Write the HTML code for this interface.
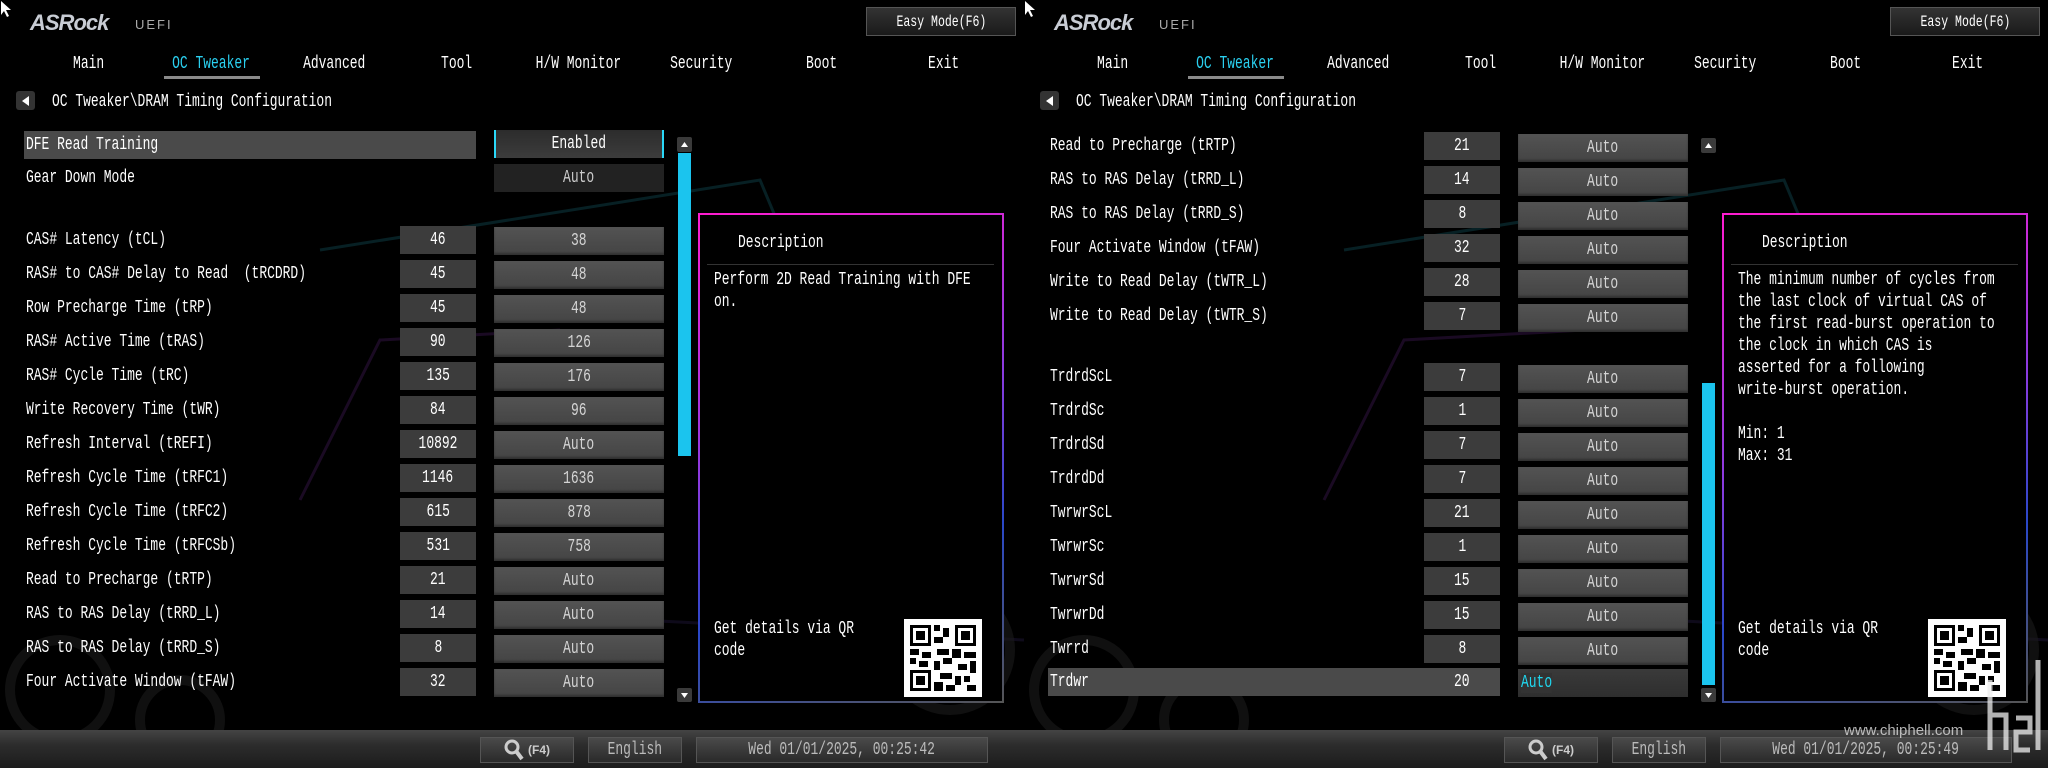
<!DOCTYPE html>
<html><head><meta charset="utf-8">
<style>
*{margin:0;padding:0;box-sizing:border-box}
body{width:2048px;height:768px;background:#000;overflow:hidden;position:relative;font-family:"Liberation Mono","DejaVu Sans Mono",monospace;color:#fff}
.half{position:absolute;top:0;width:1024px;height:768px;overflow:hidden;background:#000}
.a{position:absolute}
.s{display:inline-block;white-space:nowrap;transform:scaleX(.72);transform-origin:0 50%;font-size:18px;line-height:20px}
.c{display:flex;align-items:center;justify-content:center}
.c .s{transform-origin:50% 50%}
.lbl,.val,.set{margin-top:2px}
.lbl{position:absolute;left:26px;height:28px;display:flex;align-items:center}
.val{position:absolute;left:400px;width:76px;height:28px;background:#3c3c3c}
.set{position:absolute;left:494px;width:170px;height:28px;background:linear-gradient(#535353,#444);color:#d4d4d4;box-shadow:inset 0 -2px 2px rgba(0,0,0,.3)}
.tab{position:absolute;top:54px;height:22px;display:flex;justify-content:center;width:120px}
.tab .s{transform-origin:50% 50%}
.btn{position:absolute;top:737px;height:26px;background:linear-gradient(#4a4a4a,#2a2a2a);border:1px solid #555;color:#bbb}
.bar{position:absolute;left:0;top:730px;width:1024px;height:38px;background:linear-gradient(#444,#2c2c2c 40%,#1c1c1c)}
.panel{position:absolute;left:698px;top:213px;width:306px;height:490px;background:linear-gradient(160deg,#ff1cd0,#8a3be0 45%,#2a48c8 70%,#555);padding:2px}
.panel>div{width:100%;height:100%;background:#000;position:relative}
.logo{position:absolute;left:30px;top:10px;font:italic 900 22px 'Liberation Sans',sans-serif;color:#c8ccd4;letter-spacing:-1px}
</style></head><body>

<!-- ============ LEFT HALF ============ -->
<div class="half" style="left:0">
<svg class="a" style="left:0;top:0" width="1024" height="768">
 <g fill="none" stroke-width="3" opacity=".25">
  <polyline points="320,250 760,180 860,420" stroke="#1a7f8f"/>
  <polyline points="300,500 380,340 560,330" stroke="#6a2a8a"/>
  <polyline points="640,620 1024,640" stroke="#3a2a6a"/>
  <polyline points="740,300 880,430 760,560" stroke="#1d3f5a"/>
 </g>
 <g fill="none" stroke="#1a1a1a" stroke-width="10" opacity=".6">
  <circle cx="60" cy="690" r="50"/><circle cx="180" cy="720" r="40"/><circle cx="950" cy="650" r="60"/>
 </g>
</svg>
<svg class="a" style="left:0;top:0" width="12" height="18"><path d="M1 1 L1 15 L4 11 L7 17 L9 16 L6 10 L11 10 Z" fill="#fff"/></svg>
<div class="logo">ASRock</div>
<div class="a" style="left:135px;top:17px;font:13px 'Liberation Sans',sans-serif;color:#aaa;letter-spacing:2px">UEFI</div>
<div class="a c" style="left:866px;top:7px;width:150px;height:29px;background:linear-gradient(#333,#1a1a1a);border:1px solid #555"><span class="s" style="font-size:16px">Easy Mode(F6)</span></div>

<div class="tab" style="left:29px"><span class="s">Main</span></div>
<div class="tab" style="left:151px;color:#2ad0f0"><span class="s">OC Tweaker</span></div>
<div class="a" style="left:164px;top:76px;width:96px;height:3px;background:#8a8a8a"></div>
<div class="tab" style="left:274px"><span class="s">Advanced</span></div>
<div class="tab" style="left:397px"><span class="s">Tool</span></div>
<div class="tab" style="left:518px"><span class="s">H/W Monitor</span></div>
<div class="tab" style="left:641px"><span class="s">Security</span></div>
<div class="tab" style="left:762px"><span class="s">Boot</span></div>
<div class="tab" style="left:884px"><span class="s">Exit</span></div>

<div class="a c" style="left:16px;top:91px;width:19px;height:19px;background:#333;border-radius:3px"><svg width="8" height="10"><path d="M7 0 L0 5 L7 10Z" fill="#fff"/></svg></div>
<div class="lbl" style="left:52px;top:86px"><span class="s">OC Tweaker\DRAM Timing Configuration</span></div>

<div class="a" style="left:24px;top:131px;width:452px;height:28px;background:#4a4a4a"></div>
<div class="lbl" style="top:129px"><span class="s">DFE Read Training</span></div>
<div class="a c" style="left:494px;top:130px;width:170px;height:28px;background:linear-gradient(#2c2c2c,#3c3c3c);border-left:2px solid #2ad8f8;border-right:2px solid #2ad8f8"><span class="s">Enabled</span></div>
<div class="lbl" style="top:162px"><span class="s">Gear Down Mode</span></div>
<div class="a c" style="left:494px;top:164px;width:170px;height:28px;background:#222;color:#ccc"><span class="s">Auto</span></div>

<div class="lbl" style="top:224px"><span class="s">CAS# Latency (tCL)</span></div><div class="val c" style="top:224px"><span class="s">46</span></div><div class="set c" style="top:225px"><span class="s">38</span></div>
<div class="lbl" style="top:258px"><span class="s">RAS# to CAS# Delay to Read&nbsp; (tRCDRD)</span></div><div class="val c" style="top:258px"><span class="s">45</span></div><div class="set c" style="top:259px"><span class="s">48</span></div>
<div class="lbl" style="top:292px"><span class="s">Row Precharge Time (tRP)</span></div><div class="val c" style="top:292px"><span class="s">45</span></div><div class="set c" style="top:293px"><span class="s">48</span></div>
<div class="lbl" style="top:326px"><span class="s">RAS# Active Time (tRAS)</span></div><div class="val c" style="top:326px"><span class="s">90</span></div><div class="set c" style="top:327px"><span class="s">126</span></div>
<div class="lbl" style="top:360px"><span class="s">RAS# Cycle Time (tRC)</span></div><div class="val c" style="top:360px"><span class="s">135</span></div><div class="set c" style="top:361px"><span class="s">176</span></div>
<div class="lbl" style="top:394px"><span class="s">Write Recovery Time (tWR)</span></div><div class="val c" style="top:394px"><span class="s">84</span></div><div class="set c" style="top:395px"><span class="s">96</span></div>
<div class="lbl" style="top:428px"><span class="s">Refresh Interval (tREFI)</span></div><div class="val c" style="top:428px"><span class="s">10892</span></div><div class="set c" style="top:429px"><span class="s">Auto</span></div>
<div class="lbl" style="top:462px"><span class="s">Refresh Cycle Time (tRFC1)</span></div><div class="val c" style="top:462px"><span class="s">1146</span></div><div class="set c" style="top:463px"><span class="s">1636</span></div>
<div class="lbl" style="top:496px"><span class="s">Refresh Cycle Time (tRFC2)</span></div><div class="val c" style="top:496px"><span class="s">615</span></div><div class="set c" style="top:497px"><span class="s">878</span></div>
<div class="lbl" style="top:530px"><span class="s">Refresh Cycle Time (tRFCSb)</span></div><div class="val c" style="top:530px"><span class="s">531</span></div><div class="set c" style="top:531px"><span class="s">758</span></div>
<div class="lbl" style="top:564px"><span class="s">Read to Precharge (tRTP)</span></div><div class="val c" style="top:564px"><span class="s">21</span></div><div class="set c" style="top:565px"><span class="s">Auto</span></div>
<div class="lbl" style="top:598px"><span class="s">RAS to RAS Delay (tRRD_L)</span></div><div class="val c" style="top:598px"><span class="s">14</span></div><div class="set c" style="top:599px"><span class="s">Auto</span></div>
<div class="lbl" style="top:632px"><span class="s">RAS to RAS Delay (tRRD_S)</span></div><div class="val c" style="top:632px"><span class="s">8</span></div><div class="set c" style="top:633px"><span class="s">Auto</span></div>
<div class="lbl" style="top:666px"><span class="s">Four Activate Window (tFAW)</span></div><div class="val c" style="top:666px"><span class="s">32</span></div><div class="set c" style="top:667px"><span class="s">Auto</span></div>

<div class="a c" style="left:677px;top:137px;width:15px;height:15px;background:#3a3a3a;border-radius:2px"><svg width="7" height="5"><path d="M0 5 L3.5 0 L7 5Z" fill="#fff"/></svg></div>
<div class="a" style="left:678px;top:153px;width:13px;height:303px;background:#1bc4ee"></div>
<div class="a c" style="left:677px;top:688px;width:15px;height:14px;background:#3a3a3a;border-radius:2px"><svg width="7" height="5"><path d="M0 0 L3.5 5 L7 0Z" fill="#fff"/></svg></div>

<div class="panel"><div>
 <div class="lbl" style="left:38px;top:12px"><span class="s">Description</span></div>
 <div class="a" style="left:7px;top:49px;width:287px;height:1px;background:#333"></div>
 <div class="a" style="left:14px;top:54px;line-height:22px"><div><span class="s">Perform 2D Read Training with DFE</span></div><div><span class="s">on.</span></div></div>
 <div class="a" style="left:14px;top:403px;line-height:22px"><div><span class="s">Get details via QR</span></div><div><span class="s">code</span></div></div>
 <svg class="a" style="left:204px;top:404px" width="78" height="78" viewBox="0 0 26 26"><rect width="26" height="26" fill="#fff"/><g fill="#000"><path d="M2 2h7v7H2zM17 2h7v7h-7zM2 17h7v7H2z"/></g><g fill="#fff"><path d="M3 3h5v5H3zM18 3h5v5h-5zM3 18h5v5H3z"/></g><g fill="#000"><path d="M4 4h3v3H4zM19 4h3v3h-3zM4 19h3v3H4zM10 2h2v2h-2zM13 3h2v3h-2zM10 6h3v2h-3zM11 10h4v2h-4zM2 10h3v2H2zM6 11h3v2H6zM16 10h3v3h-3zM20 11h4v2h-4zM10 14h2v3h-2zM13 13h3v2h-3zM18 15h3v2h-3zM22 14h2v4h-2zM12 18h4v2h-4zM17 19h2v3h-2zM20 19h2v2h-2zM10 21h3v3h-3zM14 22h3v2h-3zM21 22h3v2h-3zM2 13h2v2H2zM5 14h3v2H5z"/></g></svg>
</div></div>

<div class="bar"></div>
<div class="btn c" style="left:480px;width:94px"><svg width="20" height="22"><circle cx="8" cy="8" r="6" fill="none" stroke="#ccc" stroke-width="3"/><path d="M12 12 L18 20" stroke="#ccc" stroke-width="4"/></svg><span style="font:bold 12px 'Liberation Sans';color:#ccc;margin-left:4px">(F4)</span></div>
<div class="btn c" style="left:588px;width:94px"><span class="s">English</span></div>
<div class="btn c" style="left:696px;width:292px"><span class="s">Wed 01/01/2025, 00:25:42</span></div>
</div>

<!-- ============ RIGHT HALF ============ -->
<div class="half" style="left:1024px">
<svg class="a" style="left:0;top:0" width="1024" height="768">
 <g fill="none" stroke-width="3" opacity=".25">
  <polyline points="320,250 760,180 860,420" stroke="#1a7f8f"/>
  <polyline points="300,500 380,340 560,330" stroke="#6a2a8a"/>
  <polyline points="640,620 1024,640" stroke="#3a2a6a"/>
  <polyline points="740,300 880,430 760,560" stroke="#1d3f5a"/>
 </g>
 <g fill="none" stroke="#1a1a1a" stroke-width="10" opacity=".6">
  <circle cx="60" cy="690" r="50"/><circle cx="180" cy="720" r="40"/><circle cx="950" cy="650" r="60"/>
 </g>
</svg>
<svg class="a" style="left:0;top:0" width="12" height="18"><path d="M1 1 L1 15 L4 11 L7 17 L9 16 L6 10 L11 10 Z" fill="#fff"/></svg>
<div class="logo">ASRock</div>
<div class="a" style="left:135px;top:17px;font:13px 'Liberation Sans',sans-serif;color:#aaa;letter-spacing:2px">UEFI</div>
<div class="a c" style="left:866px;top:7px;width:150px;height:29px;background:linear-gradient(#333,#1a1a1a);border:1px solid #555"><span class="s" style="font-size:16px">Easy Mode(F6)</span></div>

<div class="tab" style="left:29px"><span class="s">Main</span></div>
<div class="tab" style="left:151px;color:#2ad0f0"><span class="s">OC Tweaker</span></div>
<div class="a" style="left:164px;top:76px;width:96px;height:3px;background:#8a8a8a"></div>
<div class="tab" style="left:274px"><span class="s">Advanced</span></div>
<div class="tab" style="left:397px"><span class="s">Tool</span></div>
<div class="tab" style="left:518px"><span class="s">H/W Monitor</span></div>
<div class="tab" style="left:641px"><span class="s">Security</span></div>
<div class="tab" style="left:762px"><span class="s">Boot</span></div>
<div class="tab" style="left:884px"><span class="s">Exit</span></div>

<div class="a c" style="left:16px;top:91px;width:19px;height:19px;background:#333;border-radius:3px"><svg width="8" height="10"><path d="M7 0 L0 5 L7 10Z" fill="#fff"/></svg></div>
<div class="lbl" style="left:52px;top:86px"><span class="s">OC Tweaker\DRAM Timing Configuration</span></div>

<div class="lbl" style="top:130px"><span class="s">Read to Precharge (tRTP)</span></div><div class="val c" style="top:130px"><span class="s">21</span></div><div class="set c" style="top:132px"><span class="s">Auto</span></div>
<div class="lbl" style="top:164px"><span class="s">RAS to RAS Delay (tRRD_L)</span></div><div class="val c" style="top:164px"><span class="s">14</span></div><div class="set c" style="top:166px"><span class="s">Auto</span></div>
<div class="lbl" style="top:198px"><span class="s">RAS to RAS Delay (tRRD_S)</span></div><div class="val c" style="top:198px"><span class="s">8</span></div><div class="set c" style="top:200px"><span class="s">Auto</span></div>
<div class="lbl" style="top:232px"><span class="s">Four Activate Window (tFAW)</span></div><div class="val c" style="top:232px"><span class="s">32</span></div><div class="set c" style="top:234px"><span class="s">Auto</span></div>
<div class="lbl" style="top:266px"><span class="s">Write to Read Delay (tWTR_L)</span></div><div class="val c" style="top:266px"><span class="s">28</span></div><div class="set c" style="top:268px"><span class="s">Auto</span></div>
<div class="lbl" style="top:300px"><span class="s">Write to Read Delay (tWTR_S)</span></div><div class="val c" style="top:300px"><span class="s">7</span></div><div class="set c" style="top:302px"><span class="s">Auto</span></div>

<div class="lbl" style="top:361px"><span class="s">TrdrdScL</span></div><div class="val c" style="top:361px"><span class="s">7</span></div><div class="set c" style="top:363px"><span class="s">Auto</span></div>
<div class="lbl" style="top:395px"><span class="s">TrdrdSc</span></div><div class="val c" style="top:395px"><span class="s">1</span></div><div class="set c" style="top:397px"><span class="s">Auto</span></div>
<div class="lbl" style="top:429px"><span class="s">TrdrdSd</span></div><div class="val c" style="top:429px"><span class="s">7</span></div><div class="set c" style="top:431px"><span class="s">Auto</span></div>
<div class="lbl" style="top:463px"><span class="s">TrdrdDd</span></div><div class="val c" style="top:463px"><span class="s">7</span></div><div class="set c" style="top:465px"><span class="s">Auto</span></div>
<div class="lbl" style="top:497px"><span class="s">TwrwrScL</span></div><div class="val c" style="top:497px"><span class="s">21</span></div><div class="set c" style="top:499px"><span class="s">Auto</span></div>
<div class="lbl" style="top:531px"><span class="s">TwrwrSc</span></div><div class="val c" style="top:531px"><span class="s">1</span></div><div class="set c" style="top:533px"><span class="s">Auto</span></div>
<div class="lbl" style="top:565px"><span class="s">TwrwrSd</span></div><div class="val c" style="top:565px"><span class="s">15</span></div><div class="set c" style="top:567px"><span class="s">Auto</span></div>
<div class="lbl" style="top:599px"><span class="s">TwrwrDd</span></div><div class="val c" style="top:599px"><span class="s">15</span></div><div class="set c" style="top:601px"><span class="s">Auto</span></div>
<div class="lbl" style="top:633px"><span class="s">Twrrd</span></div><div class="val c" style="top:633px"><span class="s">8</span></div><div class="set c" style="top:635px"><span class="s">Auto</span></div>
<div class="a" style="left:24px;top:668px;width:452px;height:28px;background:#4a4a4a"></div>
<div class="lbl" style="top:666px"><span class="s">Trdwr</span></div><div class="a c" style="left:400px;top:668px;width:76px;height:28px"><span class="s">20</span></div>
<div class="a" style="left:494px;top:669px;width:170px;height:28px;background:linear-gradient(#3a3a3a,#2e2e2e);display:flex;align-items:center;padding-left:3px;color:#20d8f0"><span class="s" style="background:#333">Auto</span></div>

<div class="a c" style="left:677px;top:138px;width:15px;height:15px;background:#3a3a3a;border-radius:2px"><svg width="7" height="5"><path d="M0 5 L3.5 0 L7 5Z" fill="#fff"/></svg></div>
<div class="a" style="left:678px;top:383px;width:13px;height:302px;background:#1bc4ee"></div>
<div class="a c" style="left:677px;top:688px;width:15px;height:14px;background:#3a3a3a;border-radius:2px"><svg width="7" height="5"><path d="M0 0 L3.5 5 L7 0Z" fill="#fff"/></svg></div>

<div class="panel"><div>
 <div class="lbl" style="left:38px;top:12px"><span class="s">Description</span></div>
 <div class="a" style="left:7px;top:49px;width:287px;height:1px;background:#333"></div>
 <div class="a" style="left:14px;top:54px;line-height:22px">
  <div><span class="s">The minimum number of cycles from</span></div>
  <div><span class="s">the last clock of virtual CAS of</span></div>
  <div><span class="s">the first read-burst operation to</span></div>
  <div><span class="s">the clock in which CAS is</span></div>
  <div><span class="s">asserted for a following</span></div>
  <div><span class="s">write-burst operation.</span></div>
  <div>&nbsp;</div>
  <div><span class="s">Min: 1</span></div>
  <div><span class="s">Max: 31</span></div>
 </div>
 <div class="a" style="left:14px;top:403px;line-height:22px"><div><span class="s">Get details via QR</span></div><div><span class="s">code</span></div></div>
 <svg class="a" style="left:204px;top:404px" width="78" height="78" viewBox="0 0 26 26"><rect width="26" height="26" fill="#fff"/><g fill="#000"><path d="M2 2h7v7H2zM17 2h7v7h-7zM2 17h7v7H2z"/></g><g fill="#fff"><path d="M3 3h5v5H3zM18 3h5v5h-5zM3 18h5v5H3z"/></g><g fill="#000"><path d="M4 4h3v3H4zM19 4h3v3h-3zM4 19h3v3H4zM10 2h2v2h-2zM13 3h2v3h-2zM10 6h3v2h-3zM11 10h4v2h-4zM2 10h3v2H2zM6 11h3v2H6zM16 10h3v3h-3zM20 11h4v2h-4zM10 14h2v3h-2zM13 13h3v2h-3zM18 15h3v2h-3zM22 14h2v4h-2zM12 18h4v2h-4zM17 19h2v3h-2zM20 19h2v2h-2zM10 21h3v3h-3zM14 22h3v2h-3zM21 22h3v2h-3zM2 13h2v2H2zM5 14h3v2H5z"/></g></svg>
</div></div>

<div class="bar"></div>
<div class="btn c" style="left:480px;width:94px"><svg width="20" height="22"><circle cx="8" cy="8" r="6" fill="none" stroke="#ccc" stroke-width="3"/><path d="M12 12 L18 20" stroke="#ccc" stroke-width="4"/></svg><span style="font:bold 12px 'Liberation Sans';color:#ccc;margin-left:4px">(F4)</span></div>
<div class="btn c" style="left:588px;width:94px"><span class="s">English</span></div>
<div class="btn c" style="left:696px;width:292px"><span class="s">Wed 01/01/2025, 00:25:49</span></div>
<div class="a" style="left:820px;top:722px;font:15px 'Liberation Sans',sans-serif;color:#ddd;opacity:.8">www.chiphell.com</div>
<svg class="a" style="left:960px;top:640px" width="60" height="130" opacity=".75"><g fill="none" stroke="#eee" stroke-width="5"><path d="M6 40 V110 M6 75 H22 V110 M32 78 H46 V92 H32 V110 H46 M54 20 V110"/></g></svg>
</div>
</body></html>
